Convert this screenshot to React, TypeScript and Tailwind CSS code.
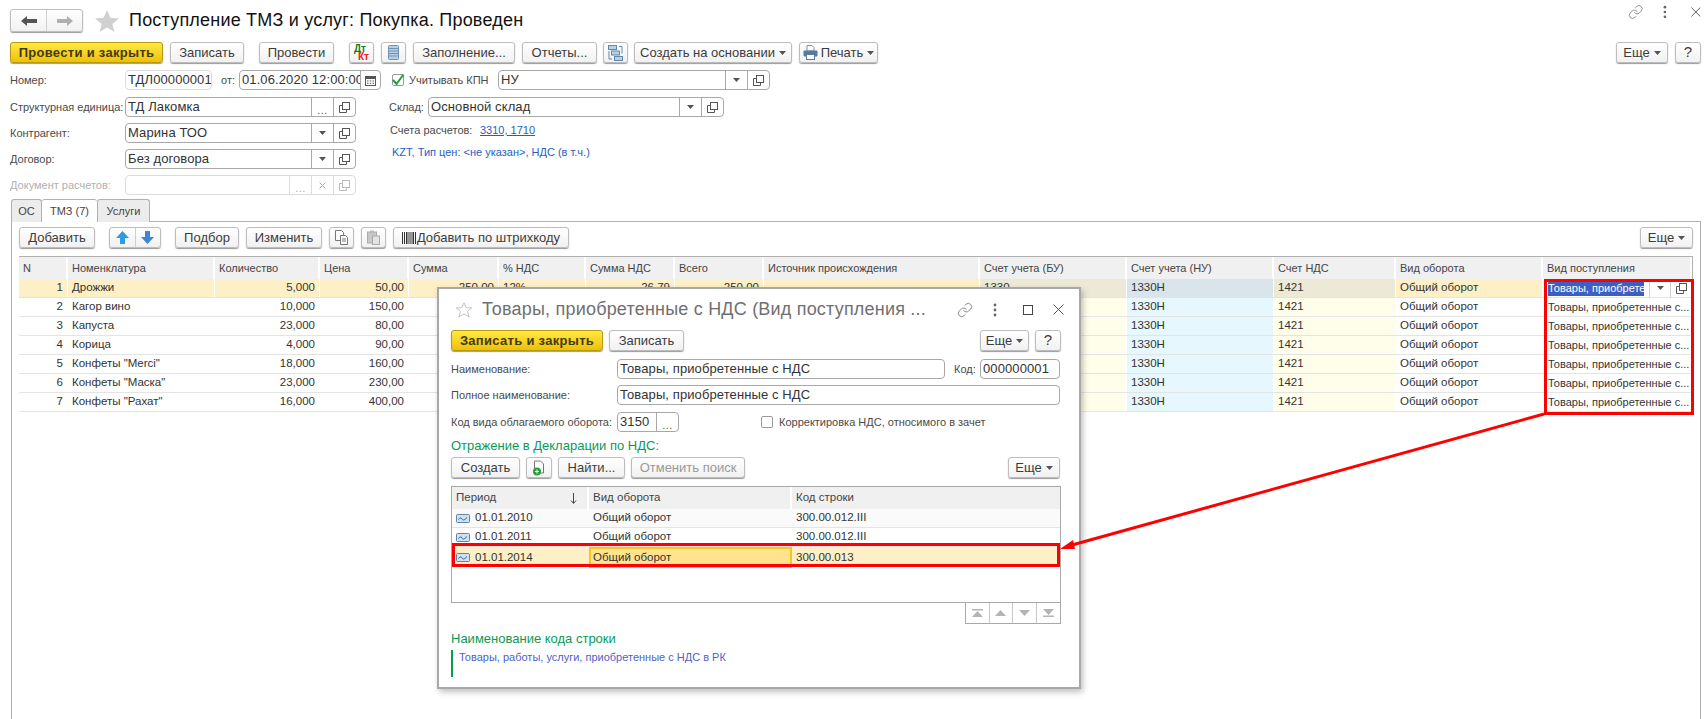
import React from "react";
import { Link } from "lucide-react";

type P = { className?: string; children?: React.ReactNode };

const Btn = ({ className = "", children, disabled }: P & { disabled?: boolean }) => (
  <div
    className={`flex h-[21px] shrink-0 items-center justify-center rounded-[3px] border border-[#bdbdbd] bg-gradient-to-b from-white to-[#f1f1f1] text-[13px] shadow-[0_1px_1px_#9a9a9a] ${disabled ? "text-[#9a9a9a] bg-[#f0f0f0]" : "text-[#3c3c3c]"} ${className}`}
  >
    {children}
  </div>
);

const YellowBtn = ({ className = "", children }: P) => (
  <div
    className={`flex h-[21px] shrink-0 items-center justify-center rounded-[3px] border border-[#b59a12] bg-gradient-to-b from-[#ffe93f] to-[#eec000] text-[13px] font-bold tracking-[0.3px] text-[#443a10] shadow-[0_1px_1px_#9a9a9a] ${className}`}
  >
    {children}
  </div>
);

const Tri = ({ className = "" }: P) => (
  <svg width="7" height="4" viewBox="0 0 7 4" className={className}>
    <path d="M0 0h7L3.5 4z" fill="#555" />
  </svg>
);

const OpenIcon = ({ light }: { light?: boolean }) => (
  <svg width="11" height="11" viewBox="0 0 11 11" fill="none" stroke={light ? "#bbb" : "#555"}>
    <rect x="3.5" y="0.5" width="7" height="7" />
    <path d="M3.5 3.5H.5v7h7V7.5" />
  </svg>
);

const Seg = ({ children, w = "w-[22px]", light }: P & { w?: string; light?: boolean }) => (
  <div className={`flex h-full ${w} shrink-0 items-center justify-center border-l ${light ? "border-[#dcdcdc] text-[#b0b0b0]" : "border-[#a8a8a8] text-[#555]"}`}>
    {children}
  </div>
);

const Field = ({ className = "", children, value, disabled }: P & { value?: string; disabled?: boolean }) => (
  <div className={`flex h-[20px] shrink-0 items-center overflow-hidden rounded-[4px] border ${disabled ? "border-[#dcdcdc]" : "border-[#a8a8a8]"} bg-white ${className}`}>
    <div className="min-w-0 flex-1 overflow-hidden whitespace-nowrap pl-[2px] text-[13px] tracking-[0.1px] text-[#333]">{value}</div>
    {children}
  </div>
);

const Label = ({ className = "", children }: P) => (
  <div className={`shrink-0 whitespace-nowrap text-[11px] text-[#4a4a4a] ${className}`}>{children}</div>
);

const Dots = () => <span className="relative top-[3px] text-[11px] leading-none tracking-[0.5px]">...</span>;

const DialogBtnArrow = () => <Tri className="ml-[4px]" />;

const colGrid = "grid-cols-[49px_147px_105px_89px_90px_87px_89px_89px_216px_147px_147px_122px_147px_149px]";

const header = ["N", "Номенклатура", "Количество", "Цена", "Сумма", "% НДС", "Сумма НДС", "Всего", "Источник происхождения", "Счет учета (БУ)", "Счет учета (НУ)", "Счет НДС", "Вид оборота", "Вид поступления"];

const rows = [
  ["1", "Дрожжи", "5,000", "50,00", "250,00", "12%", "26,79", "250,00"],
  ["2", "Кагор вино", "10,000", "150,00", "1 500,00", "12%", "160,71", "1 500,00"],
  ["3", "Капуста", "23,000", "80,00", "1 840,00", "12%", "197,14", "1 840,00"],
  ["4", "Корица", "4,000", "90,00", "360,00", "12%", "38,57", "360,00"],
  ["5", 'Конфеты "Merci"', "18,000", "160,00", "2 880,00", "12%", "308,57", "2 880,00"],
  ["6", 'Конфеты "Маска"', "23,000", "230,00", "5 290,00", "12%", "566,79", "5 290,00"],
  ["7", 'Конфеты "Рахат"', "16,000", "400,00", "6 400,00", "12%", "685,71", "6 400,00"],
];

const Cell = ({ className = "", children, right }: P & { right?: boolean }) => (
  <div className={`flex h-full items-center overflow-hidden whitespace-nowrap border-r border-white px-[4px] ${right ? "justify-end" : ""} ${className}`}>{children}</div>
);

const TableRow = ({ r, sel }: { r: string[]; sel: boolean }) => {
  const base = sel ? "bg-[#fdf0c6]" : "";
  const yel = sel ? "bg-[#ecead6]" : "bg-[#fffeea]";
  const blue = sel ? "bg-[#d9e5eb]" : "bg-[#e6f8fd]";
  return (
    <div className={`grid h-[19px] ${colGrid} border-b border-[#e4e4e4] text-[11.5px] text-[#333]`}>
      <Cell right className={base}>{r[0]}</Cell>
      <Cell className={base}>{r[1]}</Cell>
      <Cell right className={base}>{r[2]}</Cell>
      <Cell right className={base}>{r[3]}</Cell>
      <Cell right className={base}>{r[4]}</Cell>
      <Cell className={base}>{r[5]}</Cell>
      <Cell right className={base}>{r[6]}</Cell>
      <Cell right className={base}>{r[7]}</Cell>
      <Cell className={base} />
      <Cell className={yel}>1330</Cell>
      <Cell className={blue}>1330Н</Cell>
      <Cell className={yel}>1421</Cell>
      <Cell className={base}>Общий оборот</Cell>
      {sel ? (
        <div className="flex h-full items-center overflow-hidden border-r border-white pl-[5px] text-[11px]">
          <div className="w-[96px] shrink-0 overflow-hidden whitespace-nowrap bg-[#3d5fc4] text-white">Товары, приобретенные</div>
          <div className="ml-[5px] flex h-full w-[21px] shrink-0 items-center justify-center border-l border-[#cfcfcf]"><Tri /></div>
          <div className="flex h-full w-[21px] shrink-0 items-center justify-center border-l border-[#cfcfcf]"><OpenIcon /></div>
        </div>
      ) : (
        <div className="flex h-full items-center overflow-hidden whitespace-nowrap pl-[5px] text-[11px]">Товары, приобретенные с...</div>
      )}
    </div>
  );
};

const RegIcon = () => (
  <svg width="14" height="9" viewBox="0 0 14 9" className="shrink-0">
    <rect x="0.5" y="0.5" width="13" height="8" rx="1" fill="#cfe0f0" stroke="#5f84a8" />
    <path d="M2.5 5.5c1.5-2 2.5-2 3.5-.5s2 1.500 5-1.500" fill="none" stroke="#2f5f90" />
  </svg>
);

const PagerIcon = ({ d }: { d: string }) => (
  <svg width="11" height="8" viewBox="0 0 11 8"><path d={d} fill="#b4b4b4" /></svg>
);

const StarOutline = () => (
  <svg width="18" height="16" viewBox="0 0 18 16" fill="none" stroke="#c4c4c4" className="shrink-0">
    <path d="M9 .8l2.300 5h5.500l-4.300 3.600 1.700 5.600L9 11.800 3.800 15l1.700-5.600L1.200 5.800h5.500z" />
  </svg>
);

const Dialog = () => (
  <div className="absolute left-[437px] top-[287px] h-[402px] w-[644px] border-2 border-[#a8a8a8] bg-white shadow-[2px_3px_6px_rgba(0,0,0,0.25)]">
    <div className="flex h-[41px] items-center pl-[16px]">
      <StarOutline />
      <div className="ml-[9px] w-[456px] whitespace-nowrap text-[18px] tracking-[0.2px] text-[#707070]">Товары, приобретенные с НДС (Вид поступления ...</div>
      <Link size={16} strokeWidth={1} color="#555" className="ml-[19px]" />
      <svg width="4" height="14" viewBox="0 0 4 14" className="ml-[20px]"><circle cx="2" cy="2" r="1.400" fill="#666" /><circle cx="2" cy="7" r="1.400" fill="#666" /><circle cx="2" cy="12" r="1.400" fill="#666" /></svg>
      <svg width="10" height="10" viewBox="0 0 10 10" fill="none" stroke="#444" className="ml-[26px]"><rect x=".5" y=".5" width="9" height="9" /></svg>
      <svg width="11" height="11" viewBox="0 0 11 11" fill="none" stroke="#555" className="ml-[20px]"><path d="M.5.5l10 10M10.500.5l-10 10" /></svg>
    </div>
    <div className="flex pl-[12px]">
      <YellowBtn className="w-[152px]">Записать и закрыть</YellowBtn>
      <Btn className="ml-[6px] w-[75px]">Записать</Btn>
      <Btn className="ml-[296px] w-[49px]">Еще<DialogBtnArrow /></Btn>
      <Btn className="ml-[6px] w-[26px] text-[15px]">?</Btn>
    </div>
    <div className="mt-[8px] flex items-center pl-[12px]">
      <Label className="w-[166px]">Наименование:</Label>
      <Field className="w-[328px]" value="Товары, приобретенные с НДС" />
      <Label className="ml-[9px] w-[26px]">Код:</Label>
      <Field className="w-[80px]" value="000000001" />
    </div>
    <div className="mt-[6px] flex items-center pl-[12px]">
      <Label className="w-[166px]">Полное наименование:</Label>
      <Field className="w-[443px]" value="Товары, приобретенные с НДС" />
    </div>
    <div className="mt-[7px] flex items-center pl-[12px]">
      <Label className="w-[166px]">Код вида облагаемого оборота:</Label>
      <Field className="w-[62px]" value="3150"><Seg><Dots /></Seg></Field>
      <div className="ml-[82px] h-[12px] w-[12px] shrink-0 rounded-[2px] border border-[#9a9a9a]" />
      <Label className="ml-[6px]">Корректировка НДС, относимого в зачет</Label>
    </div>
    <div className="ml-[12px] mt-[5px] text-[13px] leading-[18px] text-[#0a9a55]">Отражение в Декларации по НДС:</div>
    <div className="mt-[2px] flex pl-[12px]">
      <Btn className="w-[69px]">Создать</Btn>
      <Btn className="ml-[6px] w-[26px]">
        <svg width="14" height="16" viewBox="0 0 14 16"><path d="M2.500 1h6l3 3v9h-9z" fill="#fff" stroke="#777" /><circle cx="5" cy="11.500" r="4" fill="#2a9d3c" /><path d="M5 9.500v4M3 11.500h4" stroke="#fff" /></svg>
      </Btn>
      <Btn className="ml-[6px] w-[67px]">Найти...</Btn>
      <Btn disabled className="ml-[6px] w-[114px]">Отменить поиск</Btn>
      <Btn className="ml-[263px] w-[52px]">Еще<DialogBtnArrow /></Btn>
    </div>
    <div className="ml-[12px] mt-[8px] h-[117px] w-[610px] border border-[#a8a8a8] text-[11.5px] text-[#333]">
      <div className="grid h-[22px] grid-cols-[137px_203px_1fr] bg-[#f0f0f0] text-[#444]">
        <div className="flex items-center justify-between border-r-2 border-white pl-[4px] pr-[10px]">
          Период
          <svg width="7" height="11" viewBox="0 0 7 11" fill="none" stroke="#444"><path d="M3.500 0v10M1 7.500l2.500 3 2.500-3" /></svg>
        </div>
        <div className="flex items-center border-r-2 border-white pl-[4px]">Вид оборота</div>
        <div className="flex items-center pl-[4px]">Код строки</div>
      </div>
      {[
        ["01.01.2010", "Общий оборот", "300.00.012.III"],
        ["01.01.2011", "Общий оборот", "300.00.012.III"],
      ].map((r, i) => (
        <div key={r[0]} className={`grid h-[19px] grid-cols-[137px_203px_1fr] border-b border-[#e4e4e4] ${i === 0 ? "bg-[#fafafa]" : ""}`}>
          <div className="flex items-center gap-[5px] pl-[4px]"><RegIcon />{r[0]}</div>
          <div className="flex items-center pl-[4px]">{r[1]}</div>
          <div className="flex items-center pl-[4px]">{r[2]}</div>
        </div>
      ))}
      <div className="grid h-[19px] grid-cols-[137px_203px_1fr] bg-[#fdf0c6]">
        <div className="flex items-center gap-[5px] pl-[4px]"><RegIcon />01.01.2014</div>
        <div className="flex items-center border-2 border-[#f7c61f] bg-[#ffe38e] pl-[2px]">Общий оборот</div>
        <div className="flex items-center pl-[4px]">300.00.013</div>
      </div>
    </div>
    <div className="ml-[526px] flex h-[21px] w-[96px] border border-t-0 border-[#a8a8a8]">
      <div className="flex w-[24px] items-center justify-center border-r border-[#c8c8c8]"><PagerIcon d="M0 0h11v1.500H0zM5.500 2L11 8H0z" /></div>
      <div className="flex w-[24px] items-center justify-center border-r border-[#c8c8c8]"><PagerIcon d="M5.500 1L11 7H0z" /></div>
      <div className="flex w-[24px] items-center justify-center border-r border-[#c8c8c8]"><PagerIcon d="M0 1h11L5.500 7z" /></div>
      <div className="flex w-[24px] items-center justify-center"><PagerIcon d="M0 0h11L5.500 6zM0 6.500h11V8H0z" /></div>
    </div>
    <div className="ml-[12px] mt-[6px] text-[13px] leading-[18px] text-[#0a9a55]">Наименование кода строки</div>
    <div className="ml-[12px] mt-[2px] flex h-[27px] border-l-2 border-[#0a9a55] pl-[6px]">
      <span className="text-[11px] leading-[14px] text-[#4f62c4]">Товары, работы, услуги, приобретенные с НДС в РК</span>
    </div>
  </div>
);

const Annotations = () => (
  <>
    <div className="absolute left-[1544px] top-[279px] h-[136px] w-[150px] border-[3px] border-[#ff0000]" />
    <div className="absolute left-[452px] top-[543px] h-[24px] w-[608px] border-[3px] border-[#ff0000]" />
    <svg width="1706" height="719" className="pointer-events-none absolute left-0 top-0">
      <line x1="1544" y1="414" x2="1072" y2="545" stroke="#ff0000" strokeWidth="3" />
      <path d="M1060 549l13-9 2 9z" fill="#ff0000" />
    </svg>
  </>
);

export default function App() {
  return (
    <div className="relative h-[719px] w-[1706px] overflow-hidden bg-white font-['Liberation_Sans',Arial,sans-serif]">
      <div className="flex h-[32px] items-end pl-[10px]">
        <div className="flex h-[23px] w-[73px] rounded-[3px] border border-[#bdbdbd] bg-gradient-to-b from-white to-[#f1f1f1] shadow-[0_1px_1px_#9a9a9a]">
          <div className="flex flex-1 items-center justify-center border-r border-[#cfcfcf]">
            <svg width="16" height="10" viewBox="0 0 16 10"><path d="M0 5l6-5v3h10v4H6v3z" fill="#555" /></svg>
          </div>
          <div className="flex flex-1 items-center justify-center">
            <svg width="16" height="10" viewBox="0 0 16 10"><path d="M16 5l-6-5v3H0v4h10v3z" fill="#b0b0b0" /></svg>
          </div>
        </div>
        <svg width="24" height="22" viewBox="0 0 24 22" className="ml-[12px]"><path d="M12 0l3.300 7.800 8.700.6-6.700 5.500 2.200 8.100L12 17.500 4.500 22l2.200-8.100L0 8.400l8.700-.6z" fill="#d0d0d0" /></svg>
        <div className="ml-[10px] whitespace-nowrap text-[18px] leading-[24px] tracking-[0.2px] text-[#111]">Поступление ТМЗ и услуг: Покупка. Проведен</div>
        <div className="ml-auto mr-[5px] flex h-full w-[73px] items-center pb-[8px]">
          <Link size={16} strokeWidth={1} color="#555" />
          <svg width="4" height="14" viewBox="0 0 4 14" className="ml-[20px]"><circle cx="2" cy="2" r="1.400" fill="#666" /><circle cx="2" cy="7" r="1.400" fill="#666" /><circle cx="2" cy="12" r="1.400" fill="#666" /></svg>
          <svg width="10" height="10" viewBox="0 0 10 10" fill="none" stroke="#555" className="ml-[24px]"><path d="M.5.5l9 9M9.500.5l-9 9" /></svg>
        </div>
      </div>

      <div className="mt-[10px] flex pl-[10px]">
        <YellowBtn className="w-[153px]">Провести и закрыть</YellowBtn>
        <Btn className="ml-[7px] w-[74px]">Записать</Btn>
        <Btn className="ml-[15px] w-[75px]">Провести</Btn>
        <Btn className="ml-[15px] w-[25px]">
          <div className="flex flex-col text-[10px] font-bold leading-[8px]">
            <span className="text-[#1b7a1b]">Дт</span>
            <span className="pl-[4px] text-[#f02020]">Кт</span>
          </div>
        </Btn>
        <Btn className="ml-[7px] w-[25px]">
          <svg width="11" height="15" viewBox="0 0 11 15"><rect x=".5" y=".5" width="10" height="14" rx="1" fill="#b7cfe2" stroke="#6f93b3" /><path d="M1 3.500h9M1 6h9M1 8.500h9M1 11h9" stroke="#6f93b3" /></svg>
        </Btn>
        <Btn className="ml-[7px] w-[102px]">Заполнение...</Btn>
        <Btn className="ml-[7px] w-[75px]">Отчеты...</Btn>
        <Btn className="ml-[6px] w-[25px]">
          <svg width="15" height="16" viewBox="0 0 15 16" fill="none" stroke="#5f88ab"><rect x=".5" y=".5" width="8" height="4" fill="#b7d0e6" /><rect x="3.500" y="6" width="8" height="4" fill="#b7d0e6" /><rect x="6.500" y="11.500" width="8" height="4" fill="#b7d0e6" /><path d="M11 1.500h3v7M1 6v8h3" /></svg>
        </Btn>
        <Btn className="ml-[6px] w-[158px]">Создать на основании<Tri className="ml-[4px]" /></Btn>
        <Btn className="ml-[7px] w-[79px]">
          <svg width="15" height="15" viewBox="0 0 15 15" className="mr-[3px]"><path d="M4 .5h5l2 2V6H4z" fill="#fff" stroke="#7a93ad" /><rect x=".5" y="5.500" width="14" height="6" rx="1" fill="#587b9d" /><rect x="3.500" y="9.500" width="8" height="5" fill="#fff" stroke="#587b9d" /></svg>
          Печать<Tri className="ml-[4px]" />
        </Btn>
        <Btn className="ml-auto w-[52px]">Еще<Tri className="ml-[4px]" /></Btn>
        <Btn className="ml-[7px] mr-[5px] w-[26px] text-[15px]">?</Btn>
      </div>

      <div className="mt-[7px] flex items-center pl-[10px]">
        <Label className="w-[115px]">Номер:</Label>
        <Field className="w-[87px] border-[#dcdcdc]" value="ТДЛ00000001" />
        <Label className="ml-[9px] w-[18px]">от:</Label>
        <Field className="w-[142px]" value="01.06.2020 12:00:00">
          <Seg w="w-[20px]">
            <svg width="11" height="11" viewBox="0 0 11 11"><rect x=".5" y="1.500" width="10" height="9" fill="none" stroke="#555" /><rect x="0" y="1" width="11" height="3" fill="#555" /><path d="M2 6h1.500M4.750 6h1.500M7.500 6H9M2 8.300h1.500M4.750 8.300h1.500M7.500 8.300H9" stroke="#555" /></svg>
          </Seg>
        </Field>
        <div className="ml-[11px] flex h-[12px] w-[12px] shrink-0 items-center justify-center rounded-[2px] border border-[#9a9a9a]">
          <svg width="14" height="14" viewBox="0 0 14 14" className="shrink-0"><path d="M2 7l3.500 4L12.500 1.500" fill="none" stroke="#1f9d3f" strokeWidth="2" /></svg>
        </div>
        <Label className="ml-[5px] w-[89px]">Учитывать КПН</Label>
        <Field className="w-[272px]" value="НУ"><Seg><Tri /></Seg><Seg><OpenIcon /></Seg></Field>
      </div>

      <div className="mt-[7px] flex items-center pl-[10px]">
        <Label className="w-[115px]">Структурная единица:</Label>
        <Field className="w-[231px]" value="ТД Лакомка"><Seg><Dots /></Seg><Seg><OpenIcon /></Seg></Field>
        <Label className="ml-[33px] w-[39px]">Склад:</Label>
        <Field className="w-[296px]" value="Основной склад"><Seg><Tri /></Seg><Seg><OpenIcon /></Seg></Field>
      </div>

      <div className="mt-[6px] flex items-center pl-[10px]">
        <Label className="w-[115px]">Контрагент:</Label>
        <Field className="w-[231px]" value="Марина ТОО"><Seg><Tri /></Seg><Seg><OpenIcon /></Seg></Field>
        <Label className="relative top-[-3px] ml-[34px] w-[90px]">Счета расчетов:</Label>
        <span className="relative top-[-3px] text-[11px] text-[#1f5fc0] underline">3310, 1710</span>
      </div>

      <div className="mt-[6px] flex items-center pl-[10px]">
        <Label className="w-[115px]">Договор:</Label>
        <Field className="w-[231px]" value="Без договора"><Seg><Tri /></Seg><Seg><OpenIcon /></Seg></Field>
        <span className="relative top-[-7px] ml-[36px] text-[11px] text-[#1f5fc0]">KZT, Тип цен: &lt;не указан&gt;, НДС (в т.ч.)</span>
      </div>

      <div className="mt-[6px] flex items-center pl-[10px]">
        <Label className="w-[115px] text-[#b0b0b0]">Документ расчетов:</Label>
        <Field disabled className="w-[231px]">
          <Seg light><Dots /></Seg>
          <Seg light><svg width="7" height="7" viewBox="0 0 7 7" fill="none" stroke="#aaa"><path d="M.5.5l6 6M6.500.5l-6 6" /></svg></Seg>
          <Seg light><OpenIcon light /></Seg>
        </Field>
      </div>

      <div className="mt-[4px] flex pl-[11px] text-[11px] text-[#444]">
        <div className="flex h-[23px] w-[31px] items-center justify-center rounded-t-[3px] border border-b-0 border-[#b0b0b0] bg-[#ececec]">ОС</div>
        <div className="relative z-10 flex h-[23px] w-[55px] items-center justify-center rounded-t-[3px] border-t border-[#b0b0b0] bg-white">ТМЗ (7)</div>
        <div className="flex h-[23px] w-[53px] items-center justify-center rounded-t-[3px] border border-b-0 border-[#b0b0b0] bg-[#ececec]">Услуги</div>
      </div>

      <div className="ml-[11px] mr-[5px] mt-[-1px] h-[500px] border border-[#b0b0b0] pl-[7px] pr-[7px] pt-[5px]">
        <div className="flex">
          <Btn className="w-[76px]">Добавить</Btn>
          <div className="ml-[14px] flex h-[21px] w-[52px] shrink-0 rounded-[3px] border border-[#bdbdbd] bg-gradient-to-b from-white to-[#f1f1f1] shadow-[0_1px_1px_#9a9a9a]">
            <div className="flex flex-1 items-center justify-center border-r border-[#cfcfcf]">
              <svg width="13" height="13" viewBox="0 0 13 13"><path d="M6.500 0L13 7H9v6H4V7H0z" fill="#2f9be0" /></svg>
            </div>
            <div className="flex flex-1 items-center justify-center">
              <svg width="13" height="13" viewBox="0 0 13 13"><path d="M6.500 13L13 6H9V0H4v6H0z" fill="#3b86d6" /></svg>
            </div>
          </div>
          <Btn className="ml-[14px] w-[64px]">Подбор</Btn>
          <Btn className="ml-[7px] w-[76px]">Изменить</Btn>
          <Btn className="ml-[7px] w-[25px]">
            <svg width="15" height="15" viewBox="0 0 15 15" fill="#fff" stroke="#777"><path d="M1.500.5h6l2 2v8h-8z" /><path d="M6.500 5.500h5l2 2v7h-7z" /><path d="M8 9h4M8 11h4" /></svg>
          </Btn>
          <Btn disabled className="ml-[7px] w-[25px]">
            <svg width="15" height="15" viewBox="0 0 15 15"><rect x="1.500" y="2" width="9" height="11" fill="#c8c8c8" stroke="#aaa" /><rect x="4" y="0.500" width="4" height="3" fill="#bbb" /><rect x="6.500" y="6" width="7" height="8.500" fill="#e4e4e4" stroke="#aaa" /></svg>
          </Btn>
          <Btn className="ml-[7px] w-[176px]">
            <svg width="14" height="12" viewBox="0 0 14 12" className="mr-[1px]" stroke="#333"><path d="M.5 0v12M2.500 0v12M4.500 0v12M6 0v12M8 0v12M10 0v12M11.500 0v12M13.500 0v12" /></svg>
            Добавить по штрихкоду
          </Btn>
          <Btn className="ml-auto w-[53px]">Еще<Tri className="ml-[4px]" /></Btn>
        </div>

        <div className="mt-[8px] border-t border-r border-[#b0b0b0]">
          <div className={`grid h-[22px] ${colGrid} bg-[#f0f0f0] text-[11px] text-[#444]`}>
            {header.map((h) => (
              <div key={h} className="flex items-center whitespace-nowrap border-r-2 border-white pl-[4px]">{h}</div>
            ))}
          </div>
          {rows.map((r, i) => (
            <TableRow key={r[0]} r={r} sel={i === 0} />
          ))}
        </div>
      </div>

      <Dialog />
      <Annotations />
    </div>
  );
}
